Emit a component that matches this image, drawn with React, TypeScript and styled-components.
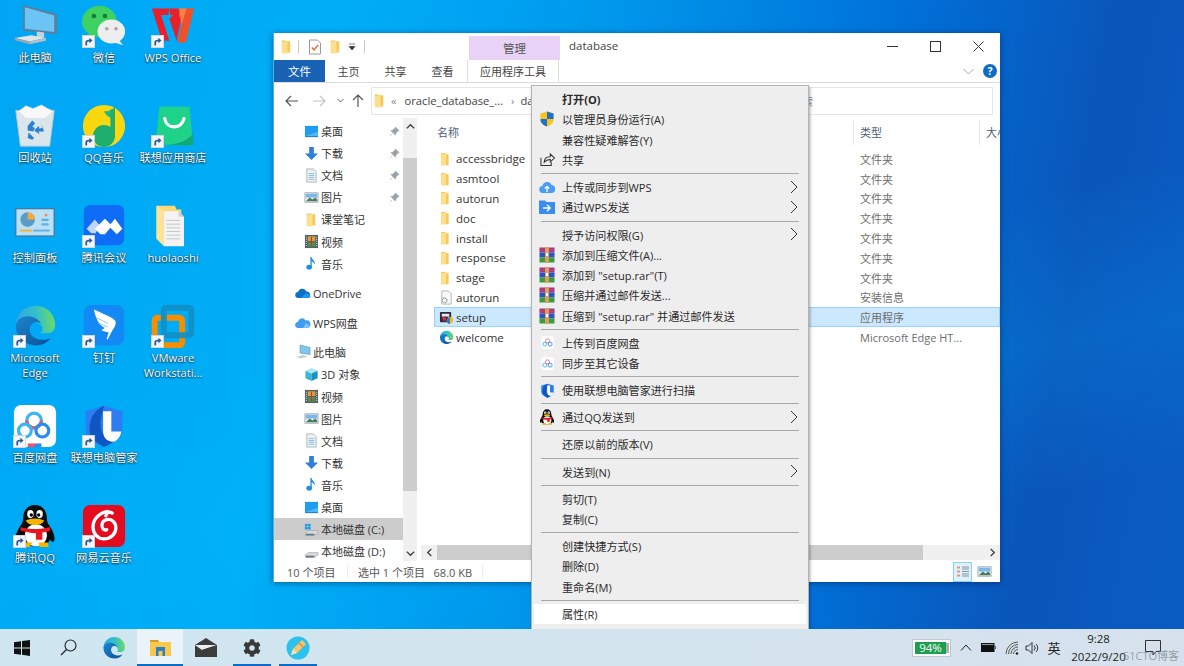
import React from 'react'
import styled, { createGlobalStyle } from 'styled-components'
import { FaCog } from 'react-icons/fa'

const UI_FONT = '"Open Sans", "Noto Sans CJK SC", sans-serif'

const GlobalStyle = createGlobalStyle`
  html, body {
    margin: 0;
    padding: 0;
    overflow: hidden;
    font-family: ${UI_FONT};
  }
  * {
    box-sizing: border-box;
  }
`

/* ---------- small drawings ---------- */

const Svg: React.FC<{ size?: number; box?: number; children: React.ReactNode }> = ({ size = 44, box = 48, children }) => (
  <svg width={size} height={size} viewBox={`0 0 ${box} ${box}`} style={{ display: 'block' }}>
    {children}
  </svg>
)

type IconProps = { size?: number }

const FolderTall: React.FC<IconProps> = ({ size = 16 }) => (
  <Svg size={size} box={16}>
    <path d="M3 1.5h4.5l1 1H12v12H3z" fill="#f6c95c" />
    <path d="M3 3.5l6-1.5v13.5H3z" fill="#fde08e" />
  </Svg>
)

const FolderFile: React.FC<IconProps> = ({ size = 14 }) => (
  <Svg size={size} box={16}>
    <path d="M2.5 1h5l1 1.5H11V15H2.5z" fill="#f6c95c" />
    <path d="M2.5 3l5.5-1.5V15H2.5z" fill="#fde08e" />
  </Svg>
)

const EdgeIcon: React.FC<IconProps> = ({ size = 44 }) => (
  <Svg size={size}>
    <defs>
      <linearGradient id="edgeTop" x1="0" y1="0.6" x2="1" y2="0.5">
        <stop offset="0" stopColor="#2fa8e6" />
        <stop offset="0.55" stopColor="#34bfc8" />
        <stop offset="1" stopColor="#6fdc62" />
      </linearGradient>
      <linearGradient id="edgeLow" x1="0" y1="0" x2="1" y2="1">
        <stop offset="0" stopColor="#1a86d0" />
        <stop offset="1" stopColor="#0c4f96" />
      </linearGradient>
    </defs>
    <path d="M3 24C3 11 13 2 25 2c12 0 21 10 21 21 0 6-4 9-9 9h-8c3-1.5 4-5 2-8-3-4-10-7-17-4C8 22 4 27 3 24z" fill="url(#edgeTop)" />
    <path d="M3 24c1-8 9-12 17-10 5 1 9 4 11 8-2-2-5-3-7-2-5 1-7 7-5 12 3 7 13 9 22 5-3 5-9 8-16 8C13 45 3 36 3 24z" fill="url(#edgeLow)" />
  </Svg>
)

const ComputerIcon = () => (
  <Svg>
    <path d="M11 1l37 10v22L11 29z" fill="#5e7e9c" />
    <path d="M13 3.5l32 9v18l-32-3.5z" fill="#6cc3f5" />
    <path d="M26 30l8 1v5l-8 1z" fill="#c9d3da" />
    <path d="M2 37l18-3 16 3-18 4z" fill="#dfe5ea" />
    <path d="M2 37l16 4v3L2 39.5z" fill="#9aa7b0" />
    <path d="M18 41l18-4v3l-18 4z" fill="#b5c0c8" />
  </Svg>
)

const WechatIcon = () => (
  <Svg>
    <ellipse cx="19" cy="19" rx="19" ry="17" fill="#3ed265" />
    <path d="M8 30l-2 8 9-5z" fill="#3ed265" />
    <circle cx="13" cy="13" r="2.5" fill="#1b7a3a" />
    <circle cx="25" cy="13" r="2.5" fill="#1b7a3a" />
    <ellipse cx="32" cy="30" rx="15" ry="13" fill="#eeeeee" />
    <path d="M40 39l5 6-10-3z" fill="#eeeeee" />
    <circle cx="27" cy="27" r="2" fill="#a8a8a8" />
    <circle cx="37" cy="27" r="2" fill="#a8a8a8" />
  </Svg>
)

const WpsIcon = () => (
  <Svg>
    <path d="M1 5h19l-1 7h-8l9 28h-8z" fill="#ea1f2c" />
    <path d="M20 5h10l3 11-5 24-8-24 4-4h-3z" fill="#e8202a" />
    <path d="M31 5h16l-9 37h-9l6-28h-5z" fill="#f0502a" />
    <path d="M31 5h8l-6 18-1-8z" fill="#f6824a" />
  </Svg>
)

const RecycleIcon = () => (
  <Svg>
    <path d="M3 7h42l-5 39H8z" fill="#dbe5ec" stroke="#b4c2cc" strokeWidth="1" />
    <path d="M6 8l8-6 8 3 9-4 7 4 6 3-9 8H14z" fill="#f8f8f8" stroke="#d0d8de" strokeWidth="0.7" />
    <path d="M16 24l5-6 3 3-3 4 3 1-2 4-6-1zM31 22l3 8h-6l1 3-6-4 5-5 1 3 3-1zM17 31l6 6-2 2-5-2z" fill="#2b82cf" />
  </Svg>
)

const QQMusicIcon = () => (
  <Svg>
    <circle cx="24" cy="24" r="23" fill="#fbd80e" />
    <path d="M36 1c-1 5-6 7-12 7 2 5 7 8 12 8z" fill="#1fb88a" />
    <path d="M31 36V6h5v30z" fill="#1fae6d" />
    <circle cx="24" cy="35" r="12" fill="#1fae6d" />
  </Svg>
)

const StoreIcon = () => (
  <Svg>
    <path d="M9 3h33l4 42H5z" fill="#1ed28a" />
    <path d="M46 32v13H8c20 0 32-4 38-13z" fill="#10a878" />
    <path d="M15 16c2 12 18 12 21 0" fill="none" stroke="#fff" strokeWidth="3.5" strokeLinecap="round" />
  </Svg>
)

const ControlPanelIcon = () => (
  <Svg>
    <rect x="3" y="5" width="42" height="30" fill="#b9e0f4" stroke="#3d7da6" strokeWidth="1.5" />
    <circle cx="16" cy="17" r="8" fill="#5b9cc4" />
    <path d="M16 9a8 8 0 0 1 8 8h-8z" fill="#f4a93a" />
    <rect x="7" y="28" width="14" height="2" fill="#f4b247" />
    <rect x="22" y="28" width="18" height="2" fill="#5fb2e4" />
    <circle cx="36" cy="12" r="1.5" fill="#f08a3a" />
    <rect x="31" y="16" width="8" height="2.5" rx="1" fill="#5fb2e4" />
    <rect x="31" y="21" width="8" height="2.5" rx="1" fill="#5fb2e4" />
  </Svg>
)

const MeetingIcon = () => (
  <Svg>
    <rect x="2" y="1" width="44" height="44" rx="7" fill="#0f6cf6" />
    <path d="M5 27l9-10 5 6-4 9h-5z" fill="#c3d4fa" />
    <path d="M14 27l11-11 6 6 5-6 8 11-6 6-7-7-6 7-5 0z" fill="#fff" />
  </Svg>
)

const FileFolderIcon = () => (
  <Svg>
    <path d="M6 2h20l2 4h5v38H14L6 38z" fill="#fbd976" />
    <path d="M14 8h16l6 6v32H14z" fill="#f3f3f3" />
    <path d="M30 8l6 6h-6z" fill="#cfcfcf" />
    <path d="M17 18h15M17 22h15M17 26h15M17 30h15M17 34h15M17 38h15" stroke="#c4c4c4" strokeWidth="1" />
    <path d="M6 2l8 6v38L6 38z" fill="#fce39a" />
  </Svg>
)

const DingIcon = () => (
  <Svg>
    <rect x="2" y="1" width="44" height="44" rx="8" fill="#1389f5" />
    <path d="M13 6c8 4 18 7 23 12 2 3 0 7-3 11l-5 10-1-1 2-7-8-2 4-3c-6-2-10-10-12-20z" fill="#fff" />
    <path d="M16 15l12 6M18 21l10 4" stroke="#8cc6fa" strokeWidth="1" />
  </Svg>
)

const VmwareIcon = () => (
  <Svg>
    <rect x="4" y="15" width="30" height="30" rx="3" fill="none" stroke="#f68f00" strokeWidth="6.5" />
    <rect x="14" y="4" width="30" height="30" rx="3" fill="none" stroke="#0f8fc4" strokeWidth="6.5" opacity="0.9" />
  </Svg>
)

const BaiduIcon = () => (
  <Svg>
    <rect x="1" y="1" width="46" height="46" rx="8" fill="#fff" />
    <circle cx="23" cy="18" r="8" fill="none" stroke="#38b6f4" strokeWidth="3.5" />
    <path d="M15 18a8 8 0 0 0 16 0" fill="none" stroke="#f0506a" strokeWidth="3.5" />
    <circle cx="13" cy="29" r="7" fill="none" stroke="#38b6f4" strokeWidth="3.5" />
    <circle cx="32" cy="29" r="7" fill="none" stroke="#2a8cf0" strokeWidth="3.5" />
    <path d="M16 43h8v4h-8z" fill="#f0506a" />
    <path d="M24 43h7v4h-7z" fill="#2a8cf0" />
  </Svg>
)

const ShieldIcon: React.FC<IconProps> = ({ size = 44 }) => (
  <Svg size={size}>
    <path d="M24 2l20 6v20c0 9-10 15-20 19C14 43 4 37 4 28V8z" fill="#2c7df2" />
    <path d="M24 2C12 8 6 18 9 35c4 5 10 9 15 12 4-2 7-3 10-6C22 38 18 26 21 14z" fill="#0d56c4" />
    <path d="M23 8h9v22h11c-1 5-3 8-7 11-9 1-13-4-13-12z" fill="#fff" />
  </Svg>
)

const PenguinIcon: React.FC<IconProps> = ({ size = 44 }) => (
  <Svg size={size}>
    <path d="M24 1c8 0 13 6 13 15 0 3 1 5 3 8 4 6 6 11 5 16-1 2-3 1-5-1-1 4-5 7-16 7S9 43 8 39c-2 2-4 3-5 1-1-5 1-10 5-16 2-3 3-5 3-8C11 7 16 1 24 1z" fill="#0c0c0c" />
    <ellipse cx="25" cy="34" rx="12" ry="12" fill="#fff" />
    <ellipse cx="19" cy="11" rx="3.5" ry="4.5" fill="#fff" />
    <ellipse cx="29" cy="11" rx="3.5" ry="4.5" fill="#fff" />
    <circle cx="20" cy="12" r="1.8" fill="#000" />
    <circle cx="28" cy="12" r="1.8" fill="#000" />
    <path d="M14 18c6-3 14-3 20 0-2 4-6 5-10 5s-8-1-10-5z" fill="#f7b500" />
    <path d="M8 25c10 3 22 3 32 0l1 4c-3 1-6 2-9 2v8h-7v-7c-6 0-12-2-17-3z" fill="#e8171f" />
    <path d="M11 42h10l-3 5H9zM28 42h10l1 5H29z" fill="#f7b500" />
  </Svg>
)

const NeteaseIcon = () => (
  <Svg>
    <rect x="1" y="1" width="46" height="46" rx="8" fill="#e60a1f" />
    <path d="M28 8c-8 1-16 8-16 17 0 7 5 13 12 13s13-5 13-12c0-6-5-10-10-9-4 1-6 4-5 8 1 3 3 4 5 3" fill="none" stroke="#fff" strokeWidth="3.6" strokeLinecap="round" />
    <path d="M26 13c1-4 4-5 7-3" fill="none" stroke="#fff" strokeWidth="3.6" strokeLinecap="round" />
  </Svg>
)

const UacShield = () => (
  <Svg size={16} box={16}>
    <path d="M8 .5l6.5 2v6c0 3.5-3 5.8-6.5 7-3.5-1.2-6.5-3.5-6.5-7v-6z" fill="#f8c517" />
    <path d="M8 .5l6.5 2V8H8zM8 8v7.5C4.5 14.3 1.5 12 1.5 8.5V8z" fill="#1d6fd0" />
  </Svg>
)

const ShareGlyph = () => (
  <Svg size={15} box={16}>
    <path d="M1 6v8.5h11V11M4.5 11c0-4 3-6 6.5-6V2l4.5 4.5L11 10.5V8c-3 0-5 1-6.500 3z" fill="none" stroke="#333" strokeWidth="1.1" />
  </Svg>
)

const WpsCloud: React.FC<IconProps> = ({ size = 16 }) => (
  <Svg size={size} box={16}>
    <path d="M4 14a3.5 3.5 0 0 1-.5-7A4.7 4.7 0 0 1 12.5 6a4 4 0 0 1-.5 8z" fill="#4a9cf2" />
    <path d="M8 13V7.5M5.8 9.5L8 7.3l2.2 2.2" fill="none" stroke="#fff" strokeWidth="1.3" />
  </Svg>
)

const WpsSend = () => (
  <Svg size={16} box={16}>
    <path d="M0 1.5h6l1.5 1.500H16v12H0z" fill="#3b8cf0" />
    <path d="M4 9h7M8 5.8L11.2 9 8 12.2" fill="none" stroke="#fff" strokeWidth="1.3" />
  </Svg>
)

const RarIcon = () => (
  <Svg size={16} box={16}>
    <rect x="0.5" y="0.5" width="15" height="5" fill="#a03a8e" />
    <rect x="0.5" y="5.5" width="15" height="5" fill="#2b55c4" />
    <rect x="0.5" y="10.5" width="15" height="5" fill="#3f9c3c" />
    <rect x="6" y="0.5" width="4" height="15" fill="#d8a05a" />
    <rect x="7" y="6" width="2" height="3" fill="#fff" />
    <path d="M0.5 3h5M10 3h5.5" stroke="#d8453c" strokeWidth="1" />
  </Svg>
)

const BaiduSmall = () => (
  <Svg size={13} box={16}>
    <rect width="16" height="16" rx="3" fill="#fbfdff" />
    <circle cx="8" cy="6" r="2.5" fill="none" stroke="#e8788c" strokeWidth="1.2" />
    <circle cx="4.7" cy="10" r="2.4" fill="none" stroke="#52b6ef" strokeWidth="1.2" />
    <circle cx="11.3" cy="10" r="2.4" fill="none" stroke="#4a90e8" strokeWidth="1.2" />
  </Svg>
)

const Chevron = () => (
  <svg width="8" height="14" viewBox="0 0 8 14">
    <path d="M1 1l6 6-6 6" fill="none" stroke="#333" strokeWidth="1" />
  </svg>
)

const DeskBlue = () => (
  <Svg size={15} box={16}>
    <rect x="1" y="2" width="14" height="11" fill="#1f9bef" />
    <path d="M1 13l14-5v5z" fill="#4cb6f6" />
    <rect x="1" y="13" width="14" height="1" fill="#0d6fb8" />
  </Svg>
)

const DownArrow = () => (
  <Svg size={15} box={16}>
    <path d="M5.5 1h5v7H15l-7 7-7-7h4.5z" fill="#2f7fd6" />
  </Svg>
)

const DocGlyph = () => (
  <Svg size={15} box={16}>
    <path d="M3 1h7l3 3v11H3z" fill="#eef1f3" stroke="#9aa5ad" strokeWidth="0.8" />
    <path d="M5 6h6M5 8h6M5 10h6M5 12h6" stroke="#6cb0de" strokeWidth="0.8" />
  </Svg>
)

const PicGlyph = () => (
  <Svg size={15} box={16}>
    <rect x="1" y="3" width="14" height="10" fill="#e9eef1" stroke="#8f9aa2" strokeWidth="0.8" />
    <rect x="2" y="4" width="12" height="4" fill="#7ab8ea" />
    <path d="M2 12l4-4 3 2 3-2 2 2v2z" fill="#4d7a5a" />
  </Svg>
)

const FilmGlyph = () => (
  <Svg size={15} box={16}>
    <rect x="1" y="1" width="14" height="14" fill="#55606a" />
    <rect x="4" y="2.5" width="8" height="5" fill="#d9a13c" />
    <rect x="4" y="8.5" width="8" height="5" fill="#4f8f4a" />
    <path d="M8 3v10" stroke="#c0392b" strokeWidth="1.2" />
    <path d="M2.5 3v10M13.5 3v10" stroke="#d8dde0" strokeWidth="1" strokeDasharray="1 1.2" />
  </Svg>
)

const NoteGlyph = () => (
  <Svg size={15} box={16}>
    <path d="M7.5 1v10.5" stroke="#1c8fe6" strokeWidth="1.4" />
    <ellipse cx="5.5" cy="12" rx="3" ry="2.6" fill="#1c8fe6" />
    <path d="M7.5 1c1 3 5 4 4 8-1-2-2-3-4-3.5z" fill="#1c8fe6" />
  </Svg>
)

const OneDriveGlyph = () => (
  <Svg size={16} box={16}>
    <path d="M3.5 13a3 3 0 0 1-.5-6A4.5 4.5 0 0 1 11.5 6.5 3.3 3.3 0 0 1 12.5 13z" fill="#0f6fc6" />
    <path d="M6 13l5-5 4 2c1 1 .5 3-1.5 3z" fill="#1c9be6" />
  </Svg>
)

const WpsDriveGlyph = () => (
  <Svg size={16} box={16}>
    <path d="M3.5 13a3 3 0 0 1-.5-6A4 4 0 0 1 10.5 5.5 3.5 3.5 0 0 1 12.5 13z" fill="#3e9cf2" />
    <path d="M8 13l3-5 3 2c1 1 .5 3-1.5 3z" fill="#7cc4f8" />
  </Svg>
)

const PcGlyph = () => (
  <Svg size={16} box={16}>
    <path d="M5 1l10 2.5v7L5 9z" fill="#7cc8f2" stroke="#6b8aa0" strokeWidth="0.6" />
    <path d="M1 13l7-2 5 1.5-7 2z" fill="#c8d0d6" />
  </Svg>
)

const CubeGlyph = () => (
  <Svg size={15} box={16}>
    <path d="M8 1l6.5 3L8 7 1.5 4z" fill="#a7e8f4" />
    <path d="M1.5 4L8 7v8l-6.5-3z" fill="#3bb8d8" />
    <path d="M14.5 4L8 7v8l6.5-3z" fill="#1e90c0" />
  </Svg>
)

const DriveGlyph: React.FC<{ windows?: boolean }> = ({ windows }) => (
  <Svg size={15} box={16}>
    {windows && (
      <g fill="#1c9be6">
        <rect x="1" y="2" width="2.8" height="2.8" />
        <rect x="4.3" y="2" width="2.8" height="2.8" />
        <rect x="1" y="5.3" width="2.8" height="2.8" />
        <rect x="4.3" y="5.3" width="2.8" height="2.8" />
      </g>
    )}
    <path d="M1 12l4-3h10v2.5L11 14.5H2z" fill="#d5d9dc" stroke="#8b9298" strokeWidth="0.5" />
    <path d="M2 12.5h9v1.8H2z" fill="#6f767b" />
  </Svg>
)

const SetupGlyph = () => (
  <Svg size={15} box={16}>
    <rect x="1" y="2" width="12" height="11" rx="1" fill="#2c2c34" />
    <path d="M3 4h8v3H3z" fill="#e8e8f0" />
    <path d="M3 8l3-1 2 3-3 2z" fill="#c8344a" />
    <path d="M10 7l5 1.5v3c0 2-2.5 3.2-3.5 3.5C10 14.7 8 13.5 8 11.5z" fill="#f0b820" />
    <path d="M11.5 7.5v7.5c-1.5-.3-3.5-1.5-3.5-3.5v-1.5z" fill="#2a72d0" />
  </Svg>
)

const InfGlyph = () => (
  <Svg size={15} box={16}>
    <path d="M3 1h7l3 3v11H3z" fill="#fafafa" stroke="#9ca3a8" strokeWidth="0.8" />
    <circle cx="6" cy="11" r="2.5" fill="none" stroke="#8d979e" strokeWidth="1.4" strokeDasharray="1.2 .6" />
  </Svg>
)

const ShortcutArrow = () => (
  <svg width="9" height="9" viewBox="0 0 10 10">
    <path d="M1.5 9.5V6c0-2 1.5-3 3.5-3h1V.8l3.5 3-3.5 3.2V5H5c-1 0-1.5.5-1.5 1.5v3z" fill="#2a5c9c" />
  </svg>
)

/* ---------- desktop ---------- */

const Desktop = styled.div`
  position: relative;
  width: 1184px;
  height: 666px;
  display: flex;
  flex-direction: column;
  overflow: hidden;
  background:
    linear-gradient(168deg, rgba(255, 255, 255, 0) 45%, rgba(0, 190, 255, 0.14) 62%, rgba(255, 255, 255, 0) 78%),
    linear-gradient(100deg, #00a6f4 0%, #00aef7 26%, #0098ec 47%, #0070d8 70%, #0a56ba 86%, #0a5cc2 100%);
`

const Workspace = styled.main`
  position: relative;
  flex: 1;
`

const IconGrid = styled.div`
  display: grid;
  grid-template-columns: repeat(3, 69px);
  grid-auto-rows: 100px;
  padding: 4px 0 0 0.5px;
`

const DesktopIcon = styled.div`
  display: flex;
  flex-direction: column;
  align-items: center;
  gap: 2px;
`

const IconFrame = styled.div`
  position: relative;
  width: 44px;
  height: 44px;
`

const ShortcutBadge = styled.span`
  position: absolute;
  left: 0;
  bottom: 0;
  width: 13px;
  height: 13px;
  display: flex;
  align-items: center;
  justify-content: center;
  background: #f4f6f8;
  border: 1px solid #cfd6dc;
`

const IconLabel = styled.span`
  width: 69px;
  white-space: pre-line;
  text-align: center;
  color: #fff;
  font-size: 11.2px;
  line-height: 15px;
  text-shadow: 0 1px 2px rgba(0, 0, 0, 0.75), 0 0 1px rgba(0, 0, 0, 0.6);
`

/* ---------- explorer window ---------- */

const ExplorerWindow = styled.section`
  position: absolute;
  left: 273px;
  top: 33px;
  width: 727px;
  height: 549px;
  display: flex;
  flex-direction: column;
  background: #fff;
  border-left: 1px solid #4fb3e0;
  box-shadow: 0 1px 6px rgba(0, 20, 70, 0.5);
  color: #333;
  font-size: 11px;
`

const TitleBar = styled.div`
  height: 27px;
  display: flex;
  align-items: flex-end;
`

const QuickAccess = styled.div`
  width: 195px;
  height: 27px;
  display: flex;
  align-items: center;
  padding-left: 5px;
`

const QatDivider = styled.i<{ $left: number; $right: number }>`
  width: 1px;
  height: 13px;
  background: #c9c9c9;
  margin-left: ${({ $left }) => $left}px;
  margin-right: ${({ $right }) => $right}px;
`

const QatSlot = styled.span<{ $w: number }>`
  display: flex;
  justify-content: center;
  width: ${({ $w }) => $w}px;
`

const ManageTab = styled.div`
  width: 91px;
  height: 24px;
  display: flex;
  align-items: center;
  justify-content: center;
  background: #e8d2f6;
  color: #555;
  font-size: 11.5px;
`

const TitleText = styled.div`
  flex: 1;
  align-self: center;
  margin-top: -2px;
  padding-left: 9px;
  font-size: 11.5px;
  color: #444;
`

const WindowButtons = styled.div`
  display: flex;
  align-self: stretch;
`

const WindowButton = styled.div`
  width: 43px;
  display: flex;
  align-items: center;
  justify-content: center;
`

const RibbonTabs = styled.div`
  height: 23px;
  display: flex;
  align-items: stretch;
  border-bottom: 1px solid #dcdcdc;
`

const FileTab = styled.div`
  width: 51px;
  display: flex;
  align-items: center;
  justify-content: center;
  background: #1a63b4;
  color: #fff;
  font-size: 11.5px;
`

const RibbonTab = styled.div`
  width: 47px;
  display: flex;
  align-items: center;
  justify-content: center;
  color: #444;
  font-size: 11px;
`

const ToolsTab = styled(RibbonTab)`
  width: 92px;
  margin-left: 1px;
  border-left: 1px solid #dcdcdc;
  border-right: 1px solid #dcdcdc;
`

const RibbonRight = styled.div`
  margin-left: auto;
  display: flex;
  align-items: center;
  gap: 9px;
  padding-right: 3px;
`

const HelpDot = styled.span`
  width: 14px;
  height: 14px;
  border-radius: 50%;
  background: #0f6cc4;
  color: #fff;
  font-size: 10.5px;
  font-weight: 700;
  line-height: 14px;
  text-align: center;
`

const AddressRow = styled.div`
  height: 35px;
  display: flex;
  align-items: center;
  padding: 0 7px 0 0;
`

const NavButtons = styled.div`
  width: 97px;
  display: flex;
  align-items: center;
`

const NavButton = styled.span<{ $w: number }>`
  width: ${({ $w }) => $w}px;
  display: flex;
  justify-content: center;
`

const AddressBox = styled.div`
  flex: 1;
  height: 28px;
  display: flex;
  align-items: center;
  border: 1px solid #e6e6e6;
  font-size: 11.2px;
  color: #444;
`

const Crumb = styled.span<{ $muted?: boolean; $left: number }>`
  margin-left: ${({ $left }) => $left}px;
  color: ${({ $muted }) => ($muted ? '#888' : '#444')};
  white-space: nowrap;
`

const SearchHint = styled.span`
  margin-left: auto;
  margin-right: 179px;
  color: #888;
  font-size: 11px;
  white-space: nowrap;
`

const Panes = styled.div`
  flex: 1;
  min-height: 0;
  display: flex;
`

const NavPane = styled.nav`
  width: 143px;
  display: flex;
  overflow: hidden;
`

const NavList = styled.div`
  width: 129px;
  padding-top: 2px;
  overflow: hidden;
`

const NavRow = styled.div<{ $indent: number; $gapTop?: boolean; $active?: boolean }>`
  height: 22.1px;
  display: flex;
  align-items: center;
  gap: 2px;
  margin-top: ${({ $gapTop }) => ($gapTop ? '7.5px' : '0')};
  padding-left: ${({ $indent }) => $indent}px;
  background: ${({ $active }) => ($active ? '#cccccc' : 'transparent')};
  font-size: 11px;
  color: #333;
  white-space: nowrap;
`

const NavIcon = styled.span`
  width: 16px;
  display: flex;
  justify-content: center;
`

const PinMark = styled.span`
  margin-left: auto;
  margin-right: 3px;
  display: flex;
`

const VScroll = styled.div`
  width: 14px;
  display: flex;
  flex-direction: column;
  background: #f0f0f0;
`

const ScrollEnd = styled.span`
  height: 16px;
  flex: none;
  display: flex;
  align-items: center;
  justify-content: center;
`

const VThumb = styled.div`
  height: 333px;
  margin-top: 24px;
  background: #cdcdcd;
`

const FilePane = styled.div`
  flex: 1;
  min-width: 0;
  display: flex;
  flex-direction: column;
`

const ColumnHeader = styled.div`
  height: 29px;
  flex: none;
  display: flex;
  align-items: center;
  padding-left: 20px;
  color: #4c607a;
  font-size: 11px;
`

const HeadCell = styled.span<{ $w?: number; $rule?: boolean }>`
  ${({ $w }) => ($w ? `width: ${$w}px;` : 'flex: 1;')}
  height: 24px;
  line-height: 24px;
  padding-left: ${({ $rule }) => ($rule ? '6px' : '0')};
  border-left: ${({ $rule }) => ($rule ? '1px solid #e5e5e5' : 'none')};
  overflow: hidden;
  white-space: nowrap;
`

const FileList = styled.div`
  flex: 1;
  padding: 2px 0 0 17px;
`

const FileRow = styled.div<{ $selected?: boolean }>`
  height: 19.8px;
  display: flex;
  align-items: center;
  border: 1px solid ${({ $selected }) => ($selected ? '#99d1ff' : 'transparent')};
  background: ${({ $selected }) => ($selected ? '#cce8ff' : 'transparent')};
  font-size: 11.5px;
`

const FileIcon = styled.span`
  width: 20px;
  margin-left: 1px;
  display: flex;
  justify-content: center;
`

const FileName = styled.span`
  width: 404px;
  color: #333;
`

const FileType = styled.span`
  color: #6d6d6d;
  font-size: 11px;
  white-space: nowrap;
`

const HScroll = styled.div`
  height: 15px;
  flex: none;
  margin: 0 0 1px 4px;
  display: flex;
  align-items: center;
  background: #f0f0f0;
`

const HScrollEnd = styled.span`
  width: 16px;
  flex: none;
  display: flex;
  justify-content: center;
`

const HThumb = styled.div`
  width: 486px;
  height: 100%;
  background: #cdcdcd;
`

const HSpacer = styled.div`
  flex: 1;
`

const StatusBar = styled.footer`
  height: 21px;
  flex: none;
  display: flex;
  align-items: center;
  padding-left: 13px;
  color: #555;
  font-size: 11px;
`

const StatusCell = styled.span<{ $w: number }>`
  width: ${({ $w }) => $w}px;
  white-space: pre;
`

const StatusRule = styled.i`
  width: 1px;
  height: 13px;
  margin-right: 10px;
  background: #ececec;
`

const ViewButtons = styled.div`
  margin-left: auto;
  margin-right: 6px;
  display: flex;
  align-items: center;
  gap: 3px;
`

const ViewButton = styled.span<{ $active?: boolean }>`
  width: 19px;
  height: 20px;
  display: flex;
  align-items: center;
  justify-content: center;
  border: 1px solid ${({ $active }) => ($active ? '#8fd0f0' : 'transparent')};
  background: ${({ $active }) => ($active ? '#dff1fb' : 'transparent')};
`

/* ---------- context menu ---------- */

const ContextMenu = styled.div`
  position: absolute;
  left: 531px;
  top: 85px;
  width: 278px;
  padding: 3px 2px 6px;
  background: #eeeeee;
  border: 1px solid #b4b4b4;
  box-shadow: 1px 2px 3px rgba(0, 0, 0, 0.35);
  color: #2a2a2a;
`

const MenuItem = styled.div<{ $bold?: boolean; $hot?: boolean }>`
  position: relative;
  height: 20.3px;
  display: flex;
  align-items: center;
  padding-left: 28px;
  background: ${({ $hot }) => ($hot ? '#ffffff' : 'transparent')};
  font-size: 11.1px;
  font-weight: ${({ $bold }) => ($bold ? 700 : 400)};
  white-space: pre;
`

const MenuIcon = styled.span`
  position: absolute;
  left: 5px;
  top: 2px;
  width: 16px;
  height: 16px;
  display: flex;
  align-items: center;
  justify-content: center;
`

const MenuArrow = styled.span`
  position: absolute;
  right: 8px;
  top: 3px;
  display: flex;
`

const MenuRule = styled.hr`
  height: 1px;
  margin: 2.92px 7px;
  border: 0;
  background: #a8a8a8;
`

/* ---------- taskbar ---------- */

const Taskbar = styled.footer`
  position: relative;
  height: 37px;
  flex: none;
  display: flex;
  align-items: stretch;
  background: linear-gradient(90deg, #cfe6f0 0%, #d3e5ef 45%, #d6e1ec 100%);
`

const TaskList = styled.div`
  display: flex;
  margin-left: -1px;
`

const TaskButton = styled.div<{ $active?: boolean; $running?: boolean }>`
  position: relative;
  width: 46px;
  display: flex;
  align-items: center;
  justify-content: center;
  background: ${({ $active }) => ($active ? '#e9f3f8' : 'transparent')};
  &::after {
    content: '';
    display: ${({ $active, $running }) => ($active || $running ? 'block' : 'none')};
    position: absolute;
    bottom: 0;
    left: ${({ $active }) => ($active ? '0' : '4px')};
    right: ${({ $active }) => ($active ? '0' : '4px')};
    height: 2px;
    background: #0a6cc8;
  }
`

const Tray = styled.div`
  margin-left: auto;
  display: flex;
  align-items: center;
  padding-right: 10px;
`

const BatteryBadge = styled.div`
  position: relative;
  width: 39px;
  height: 18px;
  margin-right: 6px;
  padding: 2px;
  background: #fff;
  border: 1px solid #c2c8cc;
`

const BatteryFill = styled.div`
  width: 31px;
  height: 100%;
  background: #1d9f50;
  color: #fff;
  font-size: 11.5px;
  line-height: 12px;
  text-align: center;
`

const BatteryNub = styled.span`
  position: absolute;
  right: 1px;
  top: 3px;
  width: 3px;
  height: 10px;
  background: #aab0b4;
`

const TraySlot = styled.div<{ $w: number }>`
  width: ${({ $w }) => $w}px;
  display: flex;
  align-items: center;
  justify-content: center;
  color: #222;
  font-size: 13px;
`

const Clock = styled.div`
  width: 67px;
  text-align: center;
  color: #222;
  font-size: 11.5px;
  line-height: 17.5px;
`

const Watermark = styled.span`
  position: absolute;
  right: 5px;
  bottom: 3px;
  color: rgba(110, 120, 130, 0.65);
  font-size: 11px;
`

/* ---------- data ---------- */

const desktopIcons: { label: string; icon: React.ReactNode; link?: boolean }[] = [
  { label: '此电脑', icon: <ComputerIcon /> },
  { label: '微信', icon: <WechatIcon />, link: true },
  { label: 'WPS Office', icon: <WpsIcon />, link: true },
  { label: '回收站', icon: <RecycleIcon /> },
  { label: 'QQ音乐', icon: <QQMusicIcon />, link: true },
  { label: '联想应用商店', icon: <StoreIcon />, link: true },
  { label: '控制面板', icon: <ControlPanelIcon /> },
  { label: '腾讯会议', icon: <MeetingIcon />, link: true },
  { label: 'huolaoshi', icon: <FileFolderIcon /> },
  { label: 'Microsoft\nEdge', icon: <EdgeIcon />, link: true },
  { label: '钉钉', icon: <DingIcon />, link: true },
  { label: 'VMware\nWorkstati...', icon: <VmwareIcon />, link: true },
  { label: '百度网盘', icon: <BaiduIcon />, link: true },
  { label: '联想电脑管家', icon: <ShieldIcon />, link: true },
  { label: '', icon: null },
  { label: '腾讯QQ', icon: <PenguinIcon />, link: true },
  { label: '网易云音乐', icon: <NeteaseIcon />, link: true },
]

const navItems: { label: string; icon: React.ReactNode; indent?: number; pin?: boolean; gap?: boolean; active?: boolean }[] = [
  { label: '桌面', icon: <DeskBlue />, pin: true },
  { label: '下载', icon: <DownArrow />, pin: true },
  { label: '文档', icon: <DocGlyph />, pin: true },
  { label: '图片', icon: <PicGlyph />, pin: true },
  { label: '课堂笔记', icon: <FolderTall size={15} /> },
  { label: '视频', icon: <FilmGlyph /> },
  { label: '音乐', icon: <NoteGlyph /> },
  { label: 'OneDrive', icon: <OneDriveGlyph />, indent: 21, gap: true },
  { label: 'WPS网盘', icon: <WpsDriveGlyph />, indent: 21, gap: true },
  { label: '此电脑', icon: <PcGlyph />, indent: 21, gap: true },
  { label: '3D 对象', icon: <CubeGlyph /> },
  { label: '视频', icon: <FilmGlyph /> },
  { label: '图片', icon: <PicGlyph /> },
  { label: '文档', icon: <DocGlyph /> },
  { label: '下载', icon: <DownArrow /> },
  { label: '音乐', icon: <NoteGlyph /> },
  { label: '桌面', icon: <DeskBlue /> },
  { label: '本地磁盘 (C:)', icon: <DriveGlyph windows />, active: true },
  { label: '本地磁盘 (D:)', icon: <DriveGlyph /> },
]

const files: { name: string; type: string; icon: React.ReactNode; selected?: boolean }[] = [
  { name: 'accessbridge', type: '文件夹', icon: <FolderFile /> },
  { name: 'asmtool', type: '文件夹', icon: <FolderFile /> },
  { name: 'autorun', type: '文件夹', icon: <FolderFile /> },
  { name: 'doc', type: '文件夹', icon: <FolderFile /> },
  { name: 'install', type: '文件夹', icon: <FolderFile /> },
  { name: 'response', type: '文件夹', icon: <FolderFile /> },
  { name: 'stage', type: '文件夹', icon: <FolderFile /> },
  { name: 'autorun', type: '安装信息', icon: <InfGlyph /> },
  { name: 'setup', type: '应用程序', icon: <SetupGlyph />, selected: true },
  { name: 'welcome', type: 'Microsoft Edge HT...', icon: <EdgeIcon size={15} /> },
]

type MenuEntry = { label: string; icon?: React.ReactNode; bold?: boolean; arrow?: boolean; hot?: boolean } | null

const menuEntries: MenuEntry[] = [
  { label: '打开(O)', bold: true },
  { label: '以管理员身份运行(A)', icon: <UacShield /> },
  { label: '兼容性疑难解答(Y)' },
  { label: '共享', icon: <ShareGlyph /> },
  null,
  { label: '上传或同步到WPS', icon: <WpsCloud />, arrow: true },
  { label: '通过WPS发送', icon: <WpsSend />, arrow: true },
  null,
  { label: '授予访问权限(G)', arrow: true },
  { label: '添加到压缩文件(A)...', icon: <RarIcon /> },
  { label: '添加到 "setup.rar"(T)', icon: <RarIcon /> },
  { label: '压缩并通过邮件发送...', icon: <RarIcon /> },
  { label: '压缩到 "setup.rar" 并通过邮件发送', icon: <RarIcon /> },
  null,
  { label: '上传到百度网盘', icon: <BaiduSmall /> },
  { label: '同步至其它设备', icon: <BaiduSmall /> },
  null,
  { label: '使用联想电脑管家进行扫描', icon: <ShieldIcon size={15} /> },
  null,
  { label: '通过QQ发送到', icon: <PenguinIcon size={16} />, arrow: true },
  null,
  { label: '还原以前的版本(V)' },
  null,
  { label: '发送到(N)', arrow: true },
  null,
  { label: '剪切(T)' },
  { label: '复制(C)' },
  null,
  { label: '创建快捷方式(S)' },
  { label: '删除(D)' },
  { label: '重命名(M)' },
  null,
  { label: '属性(R)', hot: true },
]

const PinIcon = () => (
  <svg width="11" height="11" viewBox="0 0 12 12">
    <path d="M7 1l4 4-1.5.5L7.5 8 7 10 2 5l2-.5 2.5-2z M3.5 8.5L1 11" fill="#9aa2a8" stroke="#9aa2a8" strokeWidth="0.6" />
  </svg>
)

const Caret: React.FC<{ dir: 'up' | 'down' | 'left' | 'right' }> = ({ dir }) => {
  const rotate = { up: 0, right: 90, down: 180, left: 270 }[dir]
  return (
    <svg width="9" height="9" viewBox="0 0 10 10" style={{ transform: `rotate(${rotate}deg)` }}>
      <path d="M1 7l4-4 4 4" fill="none" stroke="#444" strokeWidth="1.5" />
    </svg>
  )
}

const DesktopIcons = () => (
  <IconGrid>
    {desktopIcons.map((item, i) => (
      <DesktopIcon key={i}>
        {item.icon && (
          <IconFrame>
            {item.icon}
            {item.link && (
              <ShortcutBadge>
                <ShortcutArrow />
              </ShortcutBadge>
            )}
          </IconFrame>
        )}
        <IconLabel>{item.label}</IconLabel>
      </DesktopIcon>
    ))}
  </IconGrid>
)

const Explorer = () => (
  <ExplorerWindow>
    <TitleBar>
      <QuickAccess>
        <FolderTall size={15} />
        <QatDivider $left={4} $right={7} />
        <QatSlot $w={18}>
          <svg width="14" height="16" viewBox="0 0 14 16">
            <path d="M1.5 1h8l3 3v11h-11z" fill="#fff" stroke="#9a9a9a" />
            <path d="M4 8.5l2 2.5 4-5" fill="none" stroke="#e8632c" strokeWidth="1.3" />
          </svg>
        </QatSlot>
        <QatSlot $w={22}>
          <FolderTall size={15} />
        </QatSlot>
        <QatSlot $w={12}>
          <svg width="8" height="8" viewBox="0 0 8 8">
            <path d="M1 1h6M1 3.5h6L4 7z" fill="#333" stroke="#333" strokeWidth="0.6" />
          </svg>
        </QatSlot>
        <QatDivider $left={6} $right={0} />
      </QuickAccess>
      <ManageTab>管理</ManageTab>
      <TitleText>database</TitleText>
      <WindowButtons>
        <WindowButton>
          <svg width="11" height="11" viewBox="0 0 11 11">
            <path d="M0 5.5h11" stroke="#333" />
          </svg>
        </WindowButton>
        <WindowButton>
          <svg width="11" height="11" viewBox="0 0 11 11">
            <rect x="0.5" y="0.5" width="10" height="10" fill="none" stroke="#333" />
          </svg>
        </WindowButton>
        <WindowButton>
          <svg width="11" height="11" viewBox="0 0 11 11">
            <path d="M.5.5l10 10M10.5.5l-10 10" stroke="#333" />
          </svg>
        </WindowButton>
      </WindowButtons>
    </TitleBar>
    <RibbonTabs>
      <FileTab>文件</FileTab>
      <RibbonTab>主页</RibbonTab>
      <RibbonTab>共享</RibbonTab>
      <RibbonTab>查看</RibbonTab>
      <ToolsTab>应用程序工具</ToolsTab>
      <RibbonRight>
        <svg width="11" height="7" viewBox="0 0 11 7">
          <path d="M.5 1l5 5 5-5" fill="none" stroke="#a8a8a8" />
        </svg>
        <HelpDot>?</HelpDot>
      </RibbonRight>
    </RibbonTabs>
    <AddressRow>
      <NavButtons>
        <NavButton $w={34}>
          <svg width="13" height="12" viewBox="0 0 13 12">
            <path d="M13 6H1M6 1L1 6l5 5" fill="none" stroke="#555" strokeWidth="1.2" />
          </svg>
        </NavButton>
        <NavButton $w={22}>
          <svg width="13" height="12" viewBox="0 0 13 12">
            <path d="M0 6h12M7 1l5 5-5 5" fill="none" stroke="#c4c4c4" strokeWidth="1.2" />
          </svg>
        </NavButton>
        <NavButton $w={20}>
          <svg width="7" height="5" viewBox="0 0 7 5">
            <path d="M.5 1l3 3 3-3" fill="none" stroke="#666" />
          </svg>
        </NavButton>
        <NavButton $w={16}>
          <svg width="12" height="13" viewBox="0 0 12 13">
            <path d="M6 13V1M1 6l5-5 5 5" fill="none" stroke="#555" strokeWidth="1.2" />
          </svg>
        </NavButton>
      </NavButtons>
      <AddressBox>
        <FolderTall size={15} />
        <Crumb $muted $left={4}>«</Crumb>
        <Crumb $left={8}>oracle_database_...</Crumb>
        <Crumb $muted $left={8}>›</Crumb>
        <Crumb $left={6}>database</Crumb>
        <SearchHint>在 database 中搜索</SearchHint>
      </AddressBox>
    </AddressRow>
    <Panes>
      <NavPane>
        <NavList>
          {navItems.map((item, i) => (
            <NavRow key={i} $indent={item.indent ?? 29} $gapTop={item.gap} $active={item.active}>
              <NavIcon>{item.icon}</NavIcon>
              {item.label}
              {item.pin && (
                <PinMark>
                  <PinIcon />
                </PinMark>
              )}
            </NavRow>
          ))}
        </NavList>
        <VScroll>
          <ScrollEnd>
            <Caret dir="up" />
          </ScrollEnd>
          <VThumb />
          <HSpacer />
          <ScrollEnd>
            <Caret dir="down" />
          </ScrollEnd>
        </VScroll>
      </NavPane>
      <FilePane>
        <ColumnHeader>
          <HeadCell>名称</HeadCell>
          <HeadCell $w={126} $rule>类型</HeadCell>
          <HeadCell $w={21} $rule>大小</HeadCell>
        </ColumnHeader>
        <FileList>
          {files.map((file, i) => (
            <FileRow key={i} $selected={file.selected}>
              <FileIcon>{file.icon}</FileIcon>
              <FileName>{file.name}</FileName>
              <FileType>{file.type}</FileType>
            </FileRow>
          ))}
        </FileList>
        <HScroll>
          <HScrollEnd>
            <Caret dir="left" />
          </HScrollEnd>
          <HThumb />
          <HSpacer />
          <HScrollEnd>
            <Caret dir="right" />
          </HScrollEnd>
        </HScroll>
      </FilePane>
    </Panes>
    <StatusBar>
      <StatusCell $w={60}>10 个项目</StatusCell>
      <StatusRule />
      <StatusCell $w={124}>选中 1 个项目   68.0 KB</StatusCell>
      <StatusRule />
      <ViewButtons>
        <ViewButton $active>
          <svg width="13" height="13" viewBox="0 0 13 13">
            <path d="M1 2.5h3M1 6.5h3M1 10.5h3" stroke="#d89a80" strokeWidth="2" />
            <path d="M6 2h7M6 4h7M6 6.5h7M6 9h7M6 11h7" stroke="#8a949c" strokeWidth="1" />
          </svg>
        </ViewButton>
        <ViewButton>
          <PicGlyph />
        </ViewButton>
      </ViewButtons>
    </StatusBar>
  </ExplorerWindow>
)

const Menu = () => (
  <ContextMenu>
    {menuEntries.map((entry, i) =>
      entry === null ? (
        <MenuRule key={i} />
      ) : (
        <MenuItem key={i} $bold={entry.bold} $hot={entry.hot}>
          {entry.icon && <MenuIcon>{entry.icon}</MenuIcon>}
          {entry.label}
          {entry.arrow && (
            <MenuArrow>
              <Chevron />
            </MenuArrow>
          )}
        </MenuItem>
      ),
    )}
  </ContextMenu>
)

const TaskBar = () => (
  <Taskbar>
    <TaskList>
      <TaskButton>
        <svg width="16" height="16" viewBox="0 0 16 16">
          <path d="M0 2.2L7 1.2V7.6H0zM8 1l8-1v7.6H8zM0 8.4h7v6.4l-7-1zM8 8.4h8V16l-8-1.2z" fill="#111" />
        </svg>
      </TaskButton>
      <TaskButton>
        <svg width="17" height="17" viewBox="0 0 17 17">
          <circle cx="10.5" cy="6.5" r="5.5" fill="none" stroke="#222" strokeWidth="1.1" />
          <path d="M6.5 10.5L1 16" stroke="#222" strokeWidth="1.2" />
        </svg>
      </TaskButton>
      <TaskButton>
        <EdgeIcon size={24} />
      </TaskButton>
      <TaskButton $active>
        <svg width="21" height="17" viewBox="0 0 21 17">
          <path d="M0 1h8l1 2h12v14H0z" fill="#f9c94e" />
          <path d="M0 1h8l1 2H0z" fill="#d99a28" />
          <path d="M6 8h9v9h-2.5v-5h-4v5H6z" fill="#2a7fc8" />
        </svg>
      </TaskButton>
      <TaskButton>
        <svg width="24" height="20" viewBox="0 0 24 20">
          <path d="M1 7l11-7 11 7v12H1z" fill="#3c3c3c" />
          <path d="M1 7h22L8 12z" fill="#ededed" />
          <path d="M8 12l15-5-12 6z" fill="#3c3c3c" />
        </svg>
      </TaskButton>
      <TaskButton $running>
        <FaCog size={18} color="#3a3a3a" />
      </TaskButton>
      <TaskButton $running>
        <svg width="24" height="24" viewBox="0 0 24 24">
          <circle cx="12" cy="12" r="11.5" fill="#2cc2ee" />
          <path d="M5 19l2-6L16 4l4 4-9 9z" fill="#f9c46a" />
          <path d="M13 7l4 4" stroke="#f08a3a" strokeWidth="1.5" />
          <path d="M5 19l2-6 4 4z" fill="#f4e2c0" />
        </svg>
      </TaskButton>
    </TaskList>
    <Tray>
      <BatteryBadge>
        <BatteryFill>94%</BatteryFill>
        <BatteryNub />
      </BatteryBadge>
      <TraySlot $w={18}>
        <svg width="12" height="7" viewBox="0 0 12 7">
          <path d="M1 6.5L6 1l5 5.5" fill="none" stroke="#222" />
        </svg>
      </TraySlot>
      <TraySlot $w={26}>
        <svg width="15" height="9" viewBox="0 0 15 9">
          <rect width="13.5" height="9" fill="#111" />
          <rect x="13.5" y="3" width="1.5" height="3" fill="#666" />
          <rect x="1" y="1" width="11.5" height="1" fill="#999" />
        </svg>
      </TraySlot>
      <TraySlot $w={21}>
        <svg width="14" height="14" viewBox="0 0 14 14">
          <path d="M1 13a12 12 0 0 1 12-12M3.5 13a9.5 9.5 0 0 1 9.5-9.5M6 13a7 7 0 0 1 7-7M8.5 13A4.5 4.5 0 0 1 13 8.5" fill="none" stroke="#555" strokeWidth="1" />
          <circle cx="12" cy="12.5" r="1.3" fill="#222" />
        </svg>
      </TraySlot>
      <TraySlot $w={21}>
        <svg width="15" height="14" viewBox="0 0 15 14">
          <path d="M1 5v4h2.5L7 12.5V1.5L3.5 5z" fill="none" stroke="#333" />
          <path d="M9 4.5a3.5 3.5 0 0 1 0 5M11 3a5.5 5.5 0 0 1 0 8" fill="none" stroke="#333" />
        </svg>
      </TraySlot>
      <TraySlot $w={22}>英</TraySlot>
      <Clock>
        <div>9:28</div>
        <div>2022/9/20</div>
      </Clock>
      <TraySlot $w={42}>
        <svg width="16" height="16" viewBox="0 0 16 16">
          <path d="M.5.5h15v11h-4.5L8 15V11.5H.5z" fill="none" stroke="#333" />
        </svg>
      </TraySlot>
    </Tray>
    <Watermark>51CTO博客</Watermark>
  </Taskbar>
)

const App: React.FC = () => (
  <>
    <GlobalStyle />
    <Desktop>
      <Workspace>
        <DesktopIcons />
        <Explorer />
        <Menu />
      </Workspace>
      <TaskBar />
    </Desktop>
  </>
)

export default App
